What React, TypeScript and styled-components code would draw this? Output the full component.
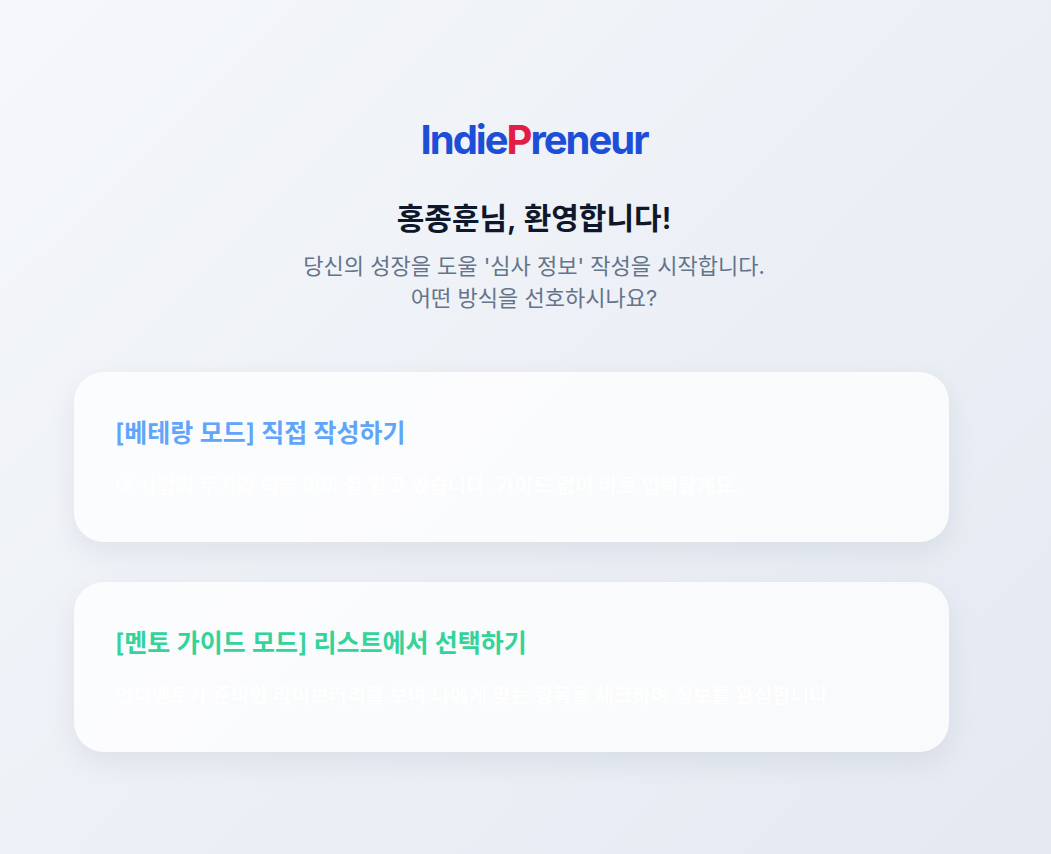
import React from "react";
import styled, { createGlobalStyle } from "styled-components";

const Global = createGlobalStyle`
  html, body { margin: 0; padding: 0; }
  body { font-family: Inter, "Noto Sans CJK KR", sans-serif; }
`;

const Page = styled.main`
  box-sizing: border-box;
  height: 854px;
  overflow: hidden;
  padding: 116px 57px 0 74px;
  background: linear-gradient(135deg, #f5f7fa 0%, #e4e9f2 100%);
`;

const Header = styled.header`
  display: flex;
  flex-direction: column;
  align-items: center;
  margin-bottom: 58px;
`;

const Logo = styled.div`
  font-size: 40px;
  line-height: 48px;
  font-weight: 700;
  letter-spacing: -0.05em;
  color: #1d4ed8;
  margin-bottom: 34px;
`;

const LogoAccent = styled.span`
  color: #e11d48;
`;

const Heading = styled.h1`
  margin: 0 0 12px;
  font-size: 30px;
  line-height: 40px;
  font-weight: 600;
  color: #0f172a;
`;

const Lead = styled.p`
  margin: 0;
  font-size: 22px;
  line-height: 32px;
  font-weight: 400;
  color: #64748b;
  text-align: center;
`;

const Options = styled.div`
  display: flex;
  flex-direction: column;
  gap: 40px;
  width: 875px;
`;

const Card = styled.button`
  box-sizing: border-box;
  display: flex;
  flex-direction: column;
  align-items: flex-start;
  height: 170px;
  padding: 42px 41px;
  border: 0;
  border-radius: 30px;
  font-family: inherit;
  text-align: left;
  background: rgba(255, 255, 255, 0.75);
  box-shadow: 0 10px 30px rgba(15, 23, 42, 0.07);
`;

const CardTitle = styled.h2<{ $color: string }>`
  margin: 0 0 20px;
  font-size: 25px;
  line-height: 38px;
  font-weight: 600;
  color: ${(p) => p.$color};
`;

const CardText = styled.p`
  margin: 0;
  font-size: 20px;
  line-height: 28px;
  font-weight: 500;
  letter-spacing: 0.05px;
  color: #ffffff;
`;

export default function App() {
  return (
    <Page>
      <Global />
      <Header>
        <Logo>
          Indie<LogoAccent>P</LogoAccent>reneur
        </Logo>
        <Heading>홍종훈님, 환영합니다!</Heading>
        <Lead>
          당신의 성장을 도울 '심사 정보' 작성을 시작합니다.
          <br />
          어떤 방식을 선호하시나요?
        </Lead>
      </Header>
      <Options>
        <Card>
          <CardTitle $color="#60a5fa">[베테랑 모드] 직접 작성하기</CardTitle>
          <CardText>내 사업의 무기와 벽을 이미 잘 알고 있습니다. 가이드 없이 바로 입력할게요.</CardText>
        </Card>
        <Card>
          <CardTitle $color="#34d399">[멘토 가이드 모드] 리스트에서 선택하기</CardTitle>
          <CardText>인디멘토가 준비한 라이브러리를 보며 나에게 맞는 항목을 체크하여 정보를 완성합니다.</CardText>
        </Card>
      </Options>
    </Page>
  );
}
